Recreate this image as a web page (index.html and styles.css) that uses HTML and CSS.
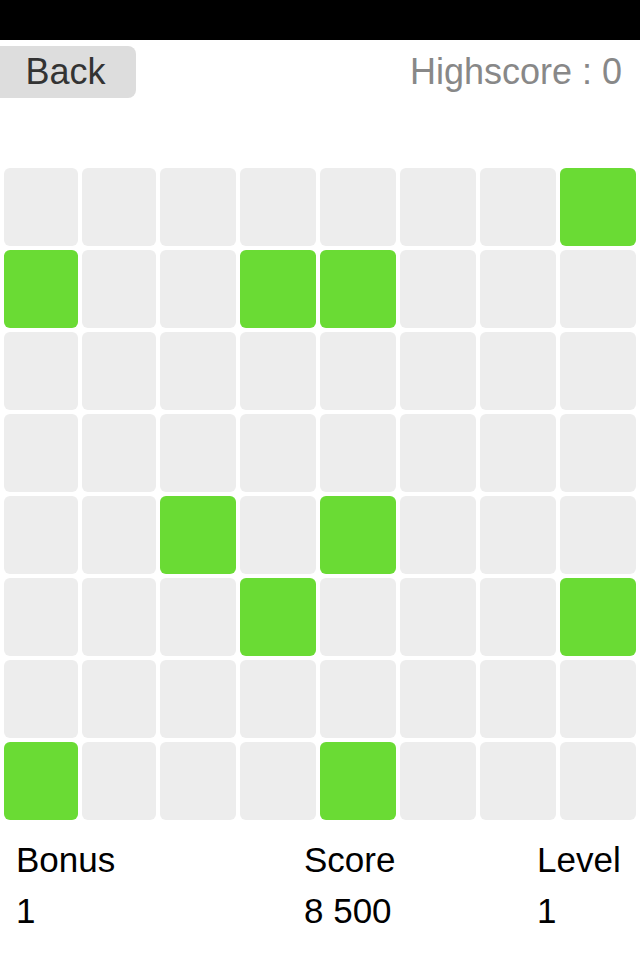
FILE: index.html
```html
<!doctype html>
<html lang="en">
<head>
<meta charset="utf-8">
<title>Grid game</title>
<meta name="viewport" content="width=device-width,initial-scale=1">
<link rel="stylesheet" href="styles.css">
</head>
<body>
<div class="statusbar"></div>

<header class="topbar">
  <button type="button" class="back">Back</button>
  <span class="highscore">Highscore : 0</span>
</header>

<div class="board">
  <div class="cell"></div><div class="cell"></div><div class="cell"></div><div class="cell"></div><div class="cell"></div><div class="cell"></div><div class="cell"></div><div class="cell on"></div>
  <div class="cell on"></div><div class="cell"></div><div class="cell"></div><div class="cell on"></div><div class="cell on"></div><div class="cell"></div><div class="cell"></div><div class="cell"></div>
  <div class="cell"></div><div class="cell"></div><div class="cell"></div><div class="cell"></div><div class="cell"></div><div class="cell"></div><div class="cell"></div><div class="cell"></div>
  <div class="cell"></div><div class="cell"></div><div class="cell"></div><div class="cell"></div><div class="cell"></div><div class="cell"></div><div class="cell"></div><div class="cell"></div>
  <div class="cell"></div><div class="cell"></div><div class="cell on"></div><div class="cell"></div><div class="cell on"></div><div class="cell"></div><div class="cell"></div><div class="cell"></div>
  <div class="cell"></div><div class="cell"></div><div class="cell"></div><div class="cell on"></div><div class="cell"></div><div class="cell"></div><div class="cell"></div><div class="cell on"></div>
  <div class="cell"></div><div class="cell"></div><div class="cell"></div><div class="cell"></div><div class="cell"></div><div class="cell"></div><div class="cell"></div><div class="cell"></div>
  <div class="cell on"></div><div class="cell"></div><div class="cell"></div><div class="cell"></div><div class="cell on"></div><div class="cell"></div><div class="cell"></div><div class="cell"></div>
</div>

<div class="stats">
  <div class="stat">
    <div>Bonus</div>
    <div>1</div>
  </div>
  <div class="stat">
    <div>Score</div>
    <div>8 500</div>
  </div>
  <div class="stat">
    <div>Level</div>
    <div>1</div>
  </div>
</div>
</body>
</html>
```

FILE: styles.css
```css
body {
  margin: 0;
  font-family: "Liberation Sans", Helvetica, Arial, sans-serif;
  background: #fff;
  color: #000;
}
.statusbar {
  height: 40px;
  background: #000;
}
.topbar {
  display: flex;
  justify-content: space-between;
  align-items: center;
  margin-top: 6px;
  height: 52px;
  padding-right: 18px;
}
.back {
  width: 136px;
  height: 52px;
  padding: 0 5px 0 0;
  border: none;
  border-radius: 0 8px 8px 0;
  background: #ddd;
  color: #333;
  font-family: inherit;
  font-size: 36px;
}
.highscore {
  font-size: 36px;
  color: #888;
}
.board {
  display: grid;
  grid-template-columns: 74px 74px repeat(6, 76px);
  grid-auto-rows: 78px;
  gap: 4px;
  padding: 0 4px;
  margin-top: 70px;
}
.cell {
  background: #ededed;
  border-radius: 6px;
}
.cell.on { background: #6adb34; }
.stats {
  display: grid;
  grid-template-columns: 288px 233px auto;
  padding-left: 16px;
  margin-top: 14px;
  font-size: 35px;
  line-height: 51px;
}
```
